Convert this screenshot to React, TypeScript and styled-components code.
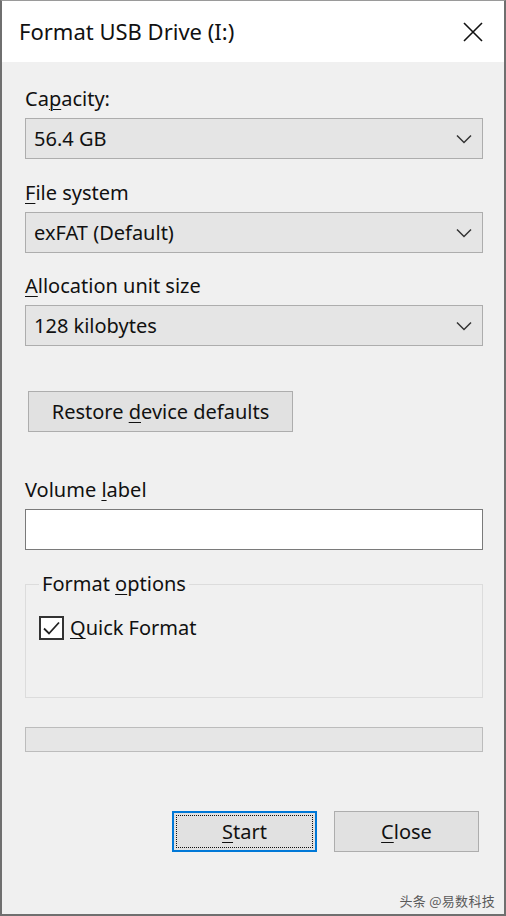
import React from "react";
import styled, { createGlobalStyle } from "styled-components";

const GlobalStyle = createGlobalStyle`
  html, body {
    margin: 0;
    padding: 0;
    background: #ffffff;
  }
  body {
    font-family: "Noto Sans", "Open Sans", "Liberation Sans", sans-serif;
    color: #000;
  }
`;

const Window = styled.div`
  width: 506px;
  height: 916px;
  box-sizing: border-box;
  border-top: 1px solid #9a9a9a;
  border-left: 2px solid #6f6f6f;
  border-right: 2px solid #6f6f6f;
  border-bottom: 2px solid #6f6f6f;
  display: flex;
  flex-direction: column;
  background: #f0f0f0;
`;

const TitleBar = styled.div`
  height: 61px;
  flex-shrink: 0;
  background: #ffffff;
  display: flex;
  align-items: center;
  justify-content: space-between;
  padding: 0 21px 0 17px;
`;

const Title = styled.span`
  font-size: 22px;
  color: #111;
  padding-bottom: 2px;
`;

const CloseX = styled.svg`
  width: 20px;
  height: 20px;
  display: block;
`;

const Body = styled.div`
  flex: 1;
  display: flex;
  flex-direction: column;
  padding: 0 21px 0 23px;
  position: relative;
`;

const FieldLabel = styled.div<{ $top: number }>`
  font-size: 20px;
  line-height: 26px;
  height: 26px;
  margin-top: ${({ $top }) => $top}px;
  margin-bottom: 6px;
  color: #111;
`;

const Key = styled.span`
  text-decoration: underline;
  text-underline-offset: 3px;
  text-decoration-thickness: 1px;
`;

const Combo = styled.div`
  height: 41px;
  box-sizing: border-box;
  border: 1px solid #adadad;
  background: #e5e5e5;
  display: flex;
  align-items: center;
  justify-content: space-between;
  padding: 0 10px 0 8px;
  font-size: 20px;
  color: #111;
`;

const Chevron = styled.svg`
  width: 16px;
  height: 10px;
  display: block;
`;

const PushButton = styled.div<{ $focused?: boolean }>`
  height: 41px;
  box-sizing: border-box;
  background: #e1e1e1;
  border: ${({ $focused }) => ($focused ? "2px solid #0078d7" : "1px solid #adadad")};
  display: flex;
  align-items: center;
  justify-content: center;
  font-size: 20px;
  color: #111;
  position: relative;
`;

const FocusRect = styled.div`
  position: absolute;
  inset: 2px;
  border: 1px dotted #111;
`;

const RestoreButton = styled(PushButton)`
  width: 265px;
  margin-left: 3px;
  margin-top: 45px;
`;

const TextInput = styled.div`
  height: 41px;
  box-sizing: border-box;
  border: 1px solid #7a7a7a;
  background: #ffffff;
`;

const Group = styled.fieldset`
  margin: 22px 0 0 0;
  padding: 18px 0 0 13px;
  height: 126px;
  box-sizing: border-box;
  border: 1px solid #dcdcdc;
  min-width: 0;
`;

const Legend = styled.legend`
  font-size: 20px;
  line-height: 24px;
  color: #111;
  padding: 0 3px;
  margin-left: 0;
`;

const CheckRow = styled.label`
  display: flex;
  align-items: center;
  gap: 6px;
  font-size: 20px;
  color: #111;
`;

const CheckBox = styled.span`
  width: 25px;
  height: 24px;
  box-sizing: border-box;
  border: 2px solid #333;
  background: #fff;
  display: flex;
  align-items: center;
  justify-content: center;
`;

const Progress = styled.div`
  margin-top: 29px;
  height: 25px;
  box-sizing: border-box;
  border: 1px solid #bcbcbc;
  background: #e6e6e6;
`;

const ButtonRow = styled.div`
  margin-top: 59px;
  display: flex;
  justify-content: flex-end;
  gap: 17px;
  padding-right: 4px;
`;

const DialogButton = styled(PushButton)`
  width: 145px;
`;

const Watermark = styled.div`
  position: absolute;
  right: 9px;
  bottom: 4px;
  font-family: "Noto Sans CJK SC", sans-serif;
  font-size: 13px;
  color: #5a5a5a;
  letter-spacing: 0.3px;
`;

export default function App() {
  return (
    <>
      <GlobalStyle />
      <Window>
        <TitleBar>
          <Title>Format USB Drive (I:)</Title>
          <CloseX viewBox="0 0 20 20">
            <path d="M1 1 L19 19 M19 1 L1 19" stroke="#111" strokeWidth="1.6" fill="none" />
          </CloseX>
        </TitleBar>
        <Body>
          <FieldLabel $top={24}>
            Ca<Key>p</Key>acity:
          </FieldLabel>
          <Combo>
            <span>56.4 GB</span>
            <ChevronIcon />
          </Combo>
          <FieldLabel $top={21}>
            <Key>F</Key>ile system
          </FieldLabel>
          <Combo>
            <span>exFAT (Default)</span>
            <ChevronIcon />
          </Combo>
          <FieldLabel $top={20}>
            <Key>A</Key>llocation unit size
          </FieldLabel>
          <Combo>
            <span>128 kilobytes</span>
            <ChevronIcon />
          </Combo>
          <RestoreButton>
            <span>
              Restore <Key>d</Key>evice defaults
            </span>
          </RestoreButton>
          <FieldLabel $top={45}>
            Volume <Key>l</Key>abel
          </FieldLabel>
          <TextInput />
          <Group>
            <Legend>
              Format <Key>o</Key>ptions
            </Legend>
            <CheckRow>
              <CheckBox>
                <svg width="19" height="16" viewBox="0 0 19 16">
                  <path d="M2 8.5 L7 13.5 L17 2.5" stroke="#222" strokeWidth="1.8" fill="none" />
                </svg>
              </CheckBox>
              <span>
                <Key>Q</Key>uick Format
              </span>
            </CheckRow>
          </Group>
          <Progress />
          <ButtonRow>
            <DialogButton $focused>
              <FocusRect />
              <span>
                <Key>S</Key>tart
              </span>
            </DialogButton>
            <DialogButton>
              <span>
                <Key>C</Key>lose
              </span>
            </DialogButton>
          </ButtonRow>
          <Watermark>头条 @易数科技</Watermark>
        </Body>
      </Window>
    </>
  );
}

function ChevronIcon() {
  return (
    <Chevron viewBox="0 0 16 10">
      <path d="M1 1.5 L8 8.5 L15 1.5" stroke="#333" strokeWidth="1.5" fill="none" />
    </Chevron>
  );
}
